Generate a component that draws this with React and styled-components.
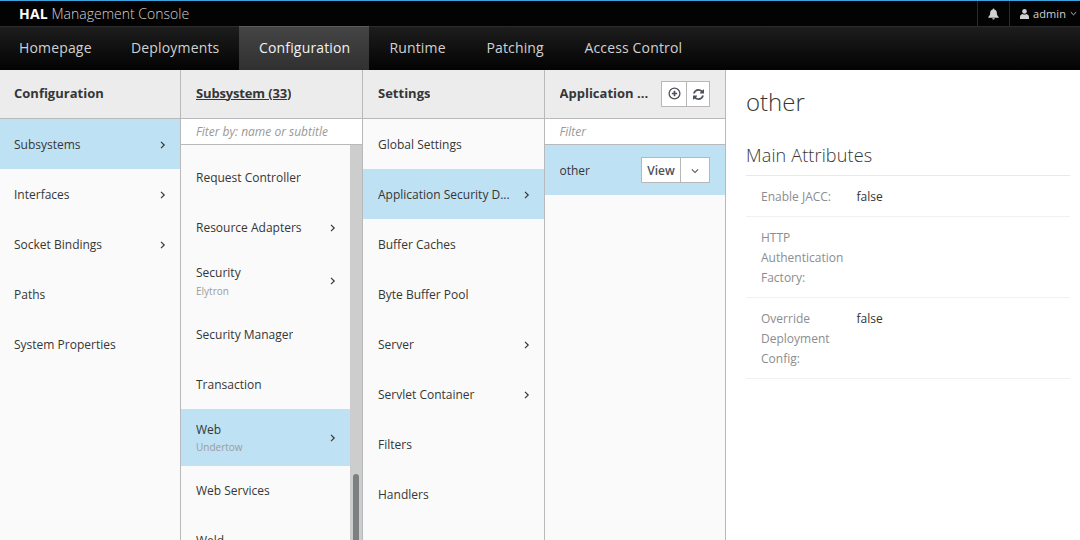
import React from "react";
import styled, { createGlobalStyle, css } from "styled-components";

const GlobalStyle = createGlobalStyle`
  *, *::before, *::after { box-sizing: border-box; }
  html, body { margin: 0; padding: 0; }
  body {
    font-family: "Open Sans", "Liberation Sans", sans-serif;
    font-size: 12px;
    line-height: 20px;
    color: #363636;
    background: #fff;
    overflow: hidden;
  }
  h1, h2, dl, dt, dd, ul, p { margin: 0; padding: 0; }
  button { font: inherit; cursor: pointer; }
`;

const Page = styled.div`
  display: flex;
  flex-direction: column;
  width: 1080px;
  height: 540px;
  overflow: hidden;
`;

const TopBar = styled.header`
  display: flex;
  flex: none;
  height: 26px;
  justify-content: space-between;
  background: #030303;
  border-top: 1px solid #39a5dc;
`;

const Brand = styled.div`
  padding-left: 19px;
  font-size: 14px;
  font-weight: 300;
  line-height: 26px;
  color: #d1d1d1;
  white-space: nowrap;
  strong { font-weight: 700; color: #fff; letter-spacing: 0.2px; }
`;

const Utilities = styled.div`
  display: flex;
`;

const Utility = styled.div`
  display: flex;
  align-items: center;
  width: ${(p) => p.$width}px;
  padding-left: 10px;
  border-left: 1px solid #2b2b2b;
  color: #d1d1d1;
  font-size: 12px;
  line-height: 25px;
  white-space: nowrap;
`;

const UserName = styled.span`
  margin: 0 4px 0 4px;
  font-size: 11px;
  letter-spacing: 0.1px;
`;

const Nav = styled.nav`
  display: flex;
  flex: none;
  height: 44px;
  margin-left: -1px;
  background: linear-gradient(#1d1d1d, #030303);
  border-top: 1px solid #2b2b2b;
`;

const NavItem = styled.a`
  width: ${(p) => p.$width}px;
  margin-top: -1px;
  padding: 0 0 0 20px;
  border-top: 1px solid ${(p) => (p.$active ? "#5c5c5c" : "transparent")};
  background: ${(p) => (p.$active ? "linear-gradient(#454545, #303030)" : "none")};
  background-clip: padding-box;
  color: ${(p) => (p.$active ? "#f1f1f1" : "#d1d1d1")};
  font-size: 14px;
  letter-spacing: 0.16px;
  line-height: 41px;
  white-space: nowrap;
`;

const Finder = styled.main`
  display: flex;
  flex: 1;
  min-height: 0;
`;

const Column = styled.section`
  display: flex;
  flex: none;
  flex-direction: column;
  width: ${(p) => p.$width}px;
  background: #fafafa;
  border-right: 1px solid #b7b9bb;
`;

const ColumnHeader = styled.header`
  display: flex;
  flex: none;
  align-items: center;
  justify-content: space-between;
  height: 49px;
  padding: 0 15px 1px ${(p) => p.$inset}px;
  background: #ececec;
  border-bottom: 1px solid #b7b9bb;
`;

const ColumnTitle = styled.h2`
  max-width: 92px;
  padding-bottom: 2px;
  overflow: hidden;
  font-size: 13px;
  font-weight: 700;
  line-height: 20px;
  white-space: nowrap;
  text-overflow: ellipsis;
  text-decoration: ${(p) => (p.$underline ? "underline" : "none")};
  letter-spacing: ${(p) => (p.$underline ? "-0.15px" : "0")};
  ${(p) => p.$wide && css`max-width: none;`}
`;

const ButtonGroup = styled.div`
  display: flex;
  flex: none;
  height: 26px;
  border: 1px solid #b7b7b7;
  background: #fff;
`;

const GroupButton = styled.button`
  display: flex;
  align-items: center;
  justify-content: center;
  width: ${(p) => p.$width}px;
  padding: ${(p) => p.$drop || 0}px 0 0;
  border: 0;
  background: #fff;
  color: #4d5258;
  font-weight: 600;
  & + & { border-left: 1px solid #b7b7b7; }
`;

const FilterInput = styled.input`
  flex: none;
  width: 100%;
  height: 26px;
  padding: 0 14px 0 ${(p) => p.$inset}px;
  border: 0;
  border-bottom: 1px solid #b7b9bb;
  border-radius: 0;
  background: #fff;
  font: 12px "Open Sans", "Liberation Sans", sans-serif;
  &::placeholder { color: #999; font-style: italic; opacity: 1; }
`;

const ScrollArea = styled.div`
  display: flex;
  flex: 1;
  min-height: 0;
`;

const ItemList = styled.ul`
  flex: 1;
  min-width: 0;
  padding-top: ${(p) => p.$top || 0}px;
  overflow: hidden;
  list-style: none;
`;

const Track = styled.div`
  flex: none;
  width: 12px;
  padding: 329px 3px 0;
  background: #cdcdcd;
`;

const Thumb = styled.div`
  width: 6px;
  height: 150px;
  border-radius: 3px;
  background: #7c8080;
`;

const Item = styled.li`
  display: flex;
  align-items: center;
  justify-content: space-between;
  height: ${(p) => (p.$tall ? 57 : 50)}px;
  padding: 0 13px 0 ${(p) => p.$inset}px;
  background: ${(p) => (p.$active ? "#bee1f4" : "transparent")};
`;

const ItemLabel = styled.span`
  display: block;
  padding-top: ${(p) => (p.$raised ? 0 : 2)}px;
  white-space: nowrap;
  overflow: hidden;
  text-overflow: ellipsis;
  max-width: 132px;
`;

const Subtitle = styled.small`
  display: block;
  margin: ${(p) => (p.$raised ? "-2px 0 0" : "-1px 0 -1px")};
  color: #9c9c9c;
  font-size: 10px;
  line-height: 19px;
`;

const RowActions = styled.div`
  margin-right: 2px;
`;

const Preview = styled.article`
  flex: 1;
  padding: 15px 10px 0 20px;
  background: #fff;
`;

const PreviewTitle = styled.h1`
  height: 33px;
  font-size: 24px;
  font-weight: 300;
  line-height: 33px;
`;

const SectionTitle = styled.h2`
  height: 58px;
  padding-top: 27px;
  border-bottom: 1px solid #e8e8e8;
  font-size: 18px;
  font-weight: 300;
  letter-spacing: 0.15px;
  line-height: 20px;
`;

const Attributes = styled.dl`
  display: block;
`;

const Attribute = styled.div`
  display: flex;
  padding: 11px 15px 9px;
  border-bottom: 1px solid #f1f1f1;
  dt { width: 95.5px; padding-right: 10px; color: #8b8d8f; }
`;

const Chevron = ({ down, size = 9, color = "currentColor" }) => (
  <svg width={size} height={size} viewBox="0 0 9 9" fill="none" stroke={color} strokeWidth={1.2}>
    <path d={down ? "M1 2.8 4.5 6.2 8 2.8" : "M3 1.9 6.2 5 3 8.100"} />
  </svg>
);

const BellIcon = () => (
  <svg width="11" height="12" viewBox="0 0 11 12" fill="currentColor">
    <path d="M5.5 0.5c.6 0 .9.4.9.9C8 1.800 8.800 3 8.800 4.500c0 2 .5 3.200 1.900 4.500v.7H.3V9c1.400-1.300 1.900-2.500 1.900-4.500C2.200 3 3 1.800 4.600 1.400c0-.5.3-.9.9-.9zM4.200 10.200h2.600c0 .8-.6 1.300-1.300 1.300s-1.300-.5-1.300-1.300z" />
  </svg>
);

const UserIcon = () => (
  <svg width="9" height="10" viewBox="0 0 9 10" fill="currentColor">
    <circle cx="4.500" cy="2.400" r="2.300" />
    <path d="M0 10V8.200C0 6.300 1 5.200 2.600 4.900c1.100.8 2.700.8 3.800 0C8 5.200 9 6.300 9 8.200V10z" />
  </svg>
);

const AddIcon = () => (
  <svg width="13" height="13" viewBox="0 0 13 13" fill="none" stroke="currentColor">
    <circle cx="6.500" cy="6.500" r="5.400" strokeWidth="1.300" />
    <path d="M6.500 3.800v5.400M3.800 6.500h5.400" strokeWidth="1.700" />
  </svg>
);

const RefreshIcon = () => (
  <svg width="11" height="11" viewBox="0 0 1536 1536" fill="currentColor">
    <path d="M1511 928q0 5-1 7-64 268-268 434.500t-478 166.500q-146 0-282.500-55t-243.500-157l-129 129q-19 19-45 19t-45-19-19-45v-448q0-26 19-45t45-19h448q26 0 45 19t19 45-19 45l-137 137q71 66 161 102t187 36q134 0 250-65t186-179q11-17 53-117 8-23 30-23h192q13 0 22.500 9.500t9.500 22.500zm25-800v448q0 26-19 45t-45 19h-448q-26 0-45-19t-19-45 19-45l138-138q-148-137-349-137-134 0-250 65t-186 179q-11 17-53 117-8 23-30 23h-199q-13 0-22.500-9.500t-9.500-22.500v-7q65-268 270-434.500t480-166.500q146 0 284 55.500t245 156.500l130-129q19-19 45-19t45 19 19 45z" />
  </svg>
);

const navigation = [
  ["Homepage", 112],
  ["Deployments", 128],
  ["Configuration", 130.4],
  ["Runtime", 97],
  ["Patching", 98],
  ["Access Control", 138],
];

const configuration = [
  { label: "Subsystems", more: true, active: true },
  { label: "Interfaces", more: true },
  { label: "Socket Bindings", more: true },
  { label: "Paths" },
  { label: "System Properties" },
];

const subsystems = [
  { label: "Request Controller" },
  { label: "Resource Adapters", more: true },
  { label: "Security", subtitle: "Elytron", more: true },
  { label: "Security Manager" },
  { label: "Transaction" },
  { label: "Web", subtitle: "Undertow", more: true, active: true, raised: true },
  { label: "Web Services", raised: true },
  { label: "Weld", raised: true },
];

const settings = [
  { label: "Global Settings" },
  { label: "Application Security D...", more: true, active: true },
  { label: "Buffer Caches" },
  { label: "Byte Buffer Pool" },
  { label: "Server", more: true },
  { label: "Servlet Container", more: true },
  { label: "Filters" },
  { label: "Handlers" },
];

const attributes = [
  ["Enable JACC:", "false"],
  ["HTTP Authentication Factory:", ""],
  ["Override Deployment Config:", "false"],
];

const Items = ({ items, inset, top }) => (
  <ItemList $top={top}>
    {items.map((item) => (
      <Item key={item.label} $inset={inset} $active={item.active} $tall={!!item.subtitle}>
        <ItemLabel $raised={item.raised && !item.subtitle}>
          {item.label}
          {item.subtitle && <Subtitle $raised={item.raised}>{item.subtitle}</Subtitle>}
        </ItemLabel>
        {item.more && <Chevron />}
      </Item>
    ))}
  </ItemList>
);

export default function App() {
  return (
    <Page>
      <GlobalStyle />
      <TopBar>
        <Brand><strong>HAL</strong> Management Console</Brand>
        <Utilities>
          <Utility $width={32}><BellIcon /></Utility>
          <Utility $width={71}>
            <UserIcon />
            <UserName>admin</UserName>
            <Chevron down size={7} />
          </Utility>
        </Utilities>
      </TopBar>
      <Nav>
        {navigation.map(([label, width]) => (
          <NavItem key={label} $width={width} $active={label === "Configuration"}>{label}</NavItem>
        ))}
      </Nav>
      <Finder>
        <Column $width={181}>
          <ColumnHeader $inset={14}><ColumnTitle $wide>Configuration</ColumnTitle></ColumnHeader>
          <Items items={configuration} inset={14} />
        </Column>
        <Column $width={182}>
          <ColumnHeader $inset={15}><ColumnTitle $wide $underline>Subsystem (33)</ColumnTitle></ColumnHeader>
          <FilterInput $inset={15} placeholder="Fiter by: name or subtitle" />
          <ScrollArea>
            <Items items={subsystems} inset={15} top={7} />
            <Track><Thumb /></Track>
          </ScrollArea>
        </Column>
        <Column $width={182}>
          <ColumnHeader $inset={15}><ColumnTitle $wide>Settings</ColumnTitle></ColumnHeader>
          <Items items={settings} inset={15} />
        </Column>
        <Column $width={181}>
          <ColumnHeader $inset={14.5}>
            <ColumnTitle>Application ...</ColumnTitle>
            <ButtonGroup>
              <GroupButton $width={24} aria-label="Add"><AddIcon /></GroupButton>
              <GroupButton $width={23} $drop={1} aria-label="Refresh"><RefreshIcon /></GroupButton>
            </ButtonGroup>
          </ColumnHeader>
          <FilterInput $inset={14.5} placeholder="Filter" />
          <ItemList>
            <Item $inset={14.5} $active>
              <ItemLabel>other</ItemLabel>
              <RowActions>
                <ButtonGroup>
                  <GroupButton $width={38} $drop={1}>View</GroupButton>
                  <GroupButton $width={29} $drop={1} aria-label="More actions"><Chevron down size={8} /></GroupButton>
                </ButtonGroup>
              </RowActions>
            </Item>
          </ItemList>
        </Column>
        <Preview>
          <PreviewTitle>other</PreviewTitle>
          <SectionTitle>Main Attributes</SectionTitle>
          <Attributes>
            {attributes.map(([name, value]) => (
              <Attribute key={name}>
                <dt>{name}</dt>
                <dd>{value}</dd>
              </Attribute>
            ))}
          </Attributes>
        </Preview>
      </Finder>
    </Page>
  );
}
